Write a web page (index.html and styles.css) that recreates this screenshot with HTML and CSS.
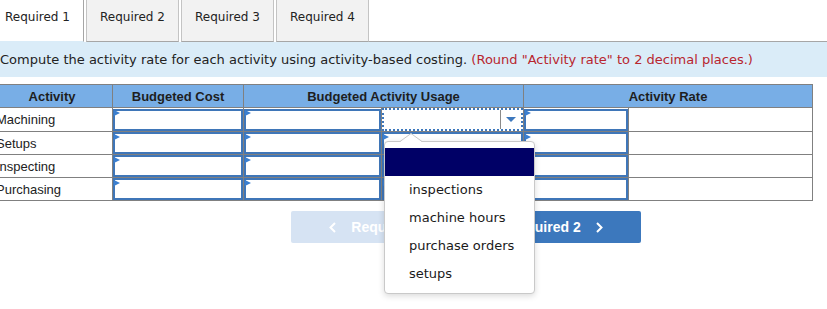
FILE: index.html
```html
<!DOCTYPE html>
<html lang="en">
<head>
    <meta charset="UTF-8">
    <meta name="viewport" content="width=device-width, initial-scale=1.0">
    <title>Activity Rates</title>
    <link rel="stylesheet" href="styles.css">
</head>
<body>
    <div class="page">
        <div class="tabs">
            <div class="tab active">Required 1</div>
            <div class="tab">Required 2</div>
            <div class="tab">Required 3</div>
            <div class="tab">Required 4</div>
            <div class="tab-fill"></div>
        </div>
        <div class="instr">
            Compute the activity rate for each activity using activity-based costing.
            <span class="note">(Round "Activity rate" to 2 decimal places.)</span>
        </div>
        <table class="grid">
            <colgroup>
                <col style="width:121px">
                <col style="width:131px">
                <col style="width:138px">
                <col style="width:142px">
                <col style="width:105px">
                <col style="width:184px">
            </colgroup>
            <thead>
                <tr>
                    <th>Activity</th>
                    <th>Budgeted Cost</th>
                    <th colspan="2">Budgeted Activity Usage</th>
                    <th colspan="2">Activity Rate</th>
                </tr>
            </thead>
            <tbody>
                <tr>
                    <td class="name">Machining</td>
                    <td class="inp"><input type="text"></td>
                    <td class="inp"><input type="text"></td>
                    <td class="sel">
                        <div class="select focus">
                            <span class="select-value"></span>
                            <span class="select-arrow"></span>
                        </div>
                    </td>
                    <td class="inp"><input type="text"></td>
                    <td></td>
                </tr>
                <tr>
                    <td class="name">Setups</td>
                    <td class="inp"><input type="text"></td>
                    <td class="inp"><input type="text"></td>
                    <td class="inp"><input type="text"></td>
                    <td class="inp"><input type="text"></td>
                    <td></td>
                </tr>
                <tr>
                    <td class="name">Inspecting</td>
                    <td class="inp"><input type="text"></td>
                    <td class="inp"><input type="text"></td>
                    <td class="inp"><input type="text"></td>
                    <td class="inp"><input type="text"></td>
                    <td></td>
                </tr>
                <tr>
                    <td class="name">Purchasing</td>
                    <td class="inp"><input type="text"></td>
                    <td class="inp"><input type="text"></td>
                    <td class="inp"><input type="text"></td>
                    <td class="inp"><input type="text"></td>
                    <td></td>
                </tr>
            </tbody>
        </table>
        <div class="nav">
            <button class="btn prev" type="button">
                <svg width="7" height="11" viewBox="0 0 7 11"><polyline points="6,1 1.5,5.5 6,10" fill="none" stroke="#fff" stroke-width="2"/></svg>
                <span>Required 1</span>
            </button>
            <button class="btn next" type="button">
                <span>Required 2</span>
                <svg width="7" height="11" viewBox="0 0 7 11"><polyline points="1,1 5.5,5.5 1,10" fill="none" stroke="#fff" stroke-width="2"/></svg>
            </button>
        </div>
    </div>

    <!-- open dropdown of the focused select -->
    <div class="menu">
        <svg class="menu-notch" width="22" height="9" viewBox="0 0 22 9"><polygon points="0,9 11,0.5 22,9" fill="#fff"/><polyline points="0,8.5 11,0.5 22,8.5" fill="none" stroke="#c9c9c9"/></svg>
        <div class="menu-item selected"></div>
        <div class="menu-item">inspections</div>
        <div class="menu-item">machine hours</div>
        <div class="menu-item">purchase orders</div>
        <div class="menu-item">setups</div>
    </div>
</body>
</html>
```

FILE: styles.css
```css
body {
    margin: 0;
    font-family: "DejaVu Sans", Verdana, sans-serif;
    color: #222;
    background: #fff;
    overflow: hidden;
    position: relative;
    height: 309px;
}
.page {
    margin-left: -9px;
}
.tabs {
    display: flex;
    height: 42px;
}
.tab {
    width: 91px;
    height: 41px;
    line-height: 34px;
    text-align: center;
    font-size: 12px;
    background: #f2f2f2;
    border-left: 1px solid #c4c4c4;
    border-right: 1px solid #c4c4c4;
    border-bottom: 1px solid #a6a6a6;
    margin-right: 2px;
}
.tab.active {
    background: #fff;
    border-left-color: #fff;
    border-right-color: #a6a6a6;
    border-bottom-color: #daecf8;
}
.tab-fill {
    flex: 1;
    border-bottom: 1px solid #a6a6a6;
    margin-left: -2px;
}
.instr {
    background: #daecf8;
    height: 35px;
    line-height: 35px;
    padding-left: 9px;
    font-size: 13px;
    color: #222;
    white-space: nowrap;
}
.note {
    color: #b8262f;
}
.grid {
    margin-top: 7px;
    border-collapse: collapse;
    table-layout: fixed;
    width: 821px;
    font-family: "Liberation Sans", Arial, sans-serif;
    font-size: 13px;
}
.grid th, .grid td {
    border: 1px solid #808080;
    padding: 0;
    height: 22px;
}
.grid th {
    background: #78aee6;
    color: #1e1e1e;
    font-weight: bold;
    text-align: center;
}
.grid td.name {
    padding-left: 4px;
    color: #222;
}
.grid td.inp {
    position: relative;
}
.grid td.inp input {
    display: block;
    width: 100%;
    height: 22px;
    box-sizing: border-box;
    margin: 0;
    border: 2px solid #3f76b8;
    background: #fff;
    outline: none;
}
.grid td.inp::before {
    content: "";
    position: absolute;
    left: 1px;
    top: 2px;
    border-left: 6px solid #3b7fd0;
    border-top: 3px solid transparent;
    border-bottom: 3px solid transparent;
}
.select {
    display: flex;
    height: 23px;
    box-sizing: border-box;
    background: #fff;
}
.select.focus {
    border: 2px dotted #3d78bd;
}
.select-value {
    flex: 1;
    border-right: 1px solid #8a8a8a;
}
.select-arrow {
    width: 20px;
    display: flex;
    align-items: center;
    justify-content: center;
}
.select-arrow::after {
    content: "";
    border-top: 5px solid #3d78bd;
    border-left: 5px solid transparent;
    border-right: 5px solid transparent;
}
.nav {
    display: flex;
    gap: 8px;
    margin-top: 10px;
    margin-left: 300px;
}
.btn {
    width: 171px;
    height: 32px;
    border: none;
    border-radius: 2px;
    color: #fff;
    font-family: "Liberation Sans", Arial, sans-serif;
    font-size: 14px;
    font-weight: bold;
    display: flex;
    align-items: center;
    justify-content: center;
    gap: 15px;
    padding: 0;
}
.btn.prev {
    background: #d6e3f3;
}
.btn.next {
    background: #3c78bd;
}
.menu {
    position: absolute;
    left: 384px;
    top: 141px;
    width: 151px;
    height: 153px;
    padding-top: 6px;
    box-sizing: border-box;
    background: #fff;
    border: 1px solid #c9c9c9;
    border-radius: 4px;
    box-shadow: 0 2px 6px rgba(0, 0, 0, 0.15);
    font-size: 13px;
}
.menu-notch {
    position: absolute;
    left: 15px;
    top: -9px;
}
.menu-item {
    height: 28px;
    line-height: 28px;
    padding-left: 24px;
    color: #1a1a1a;
}
.menu-item.selected {
    background: #000066;
}
```
